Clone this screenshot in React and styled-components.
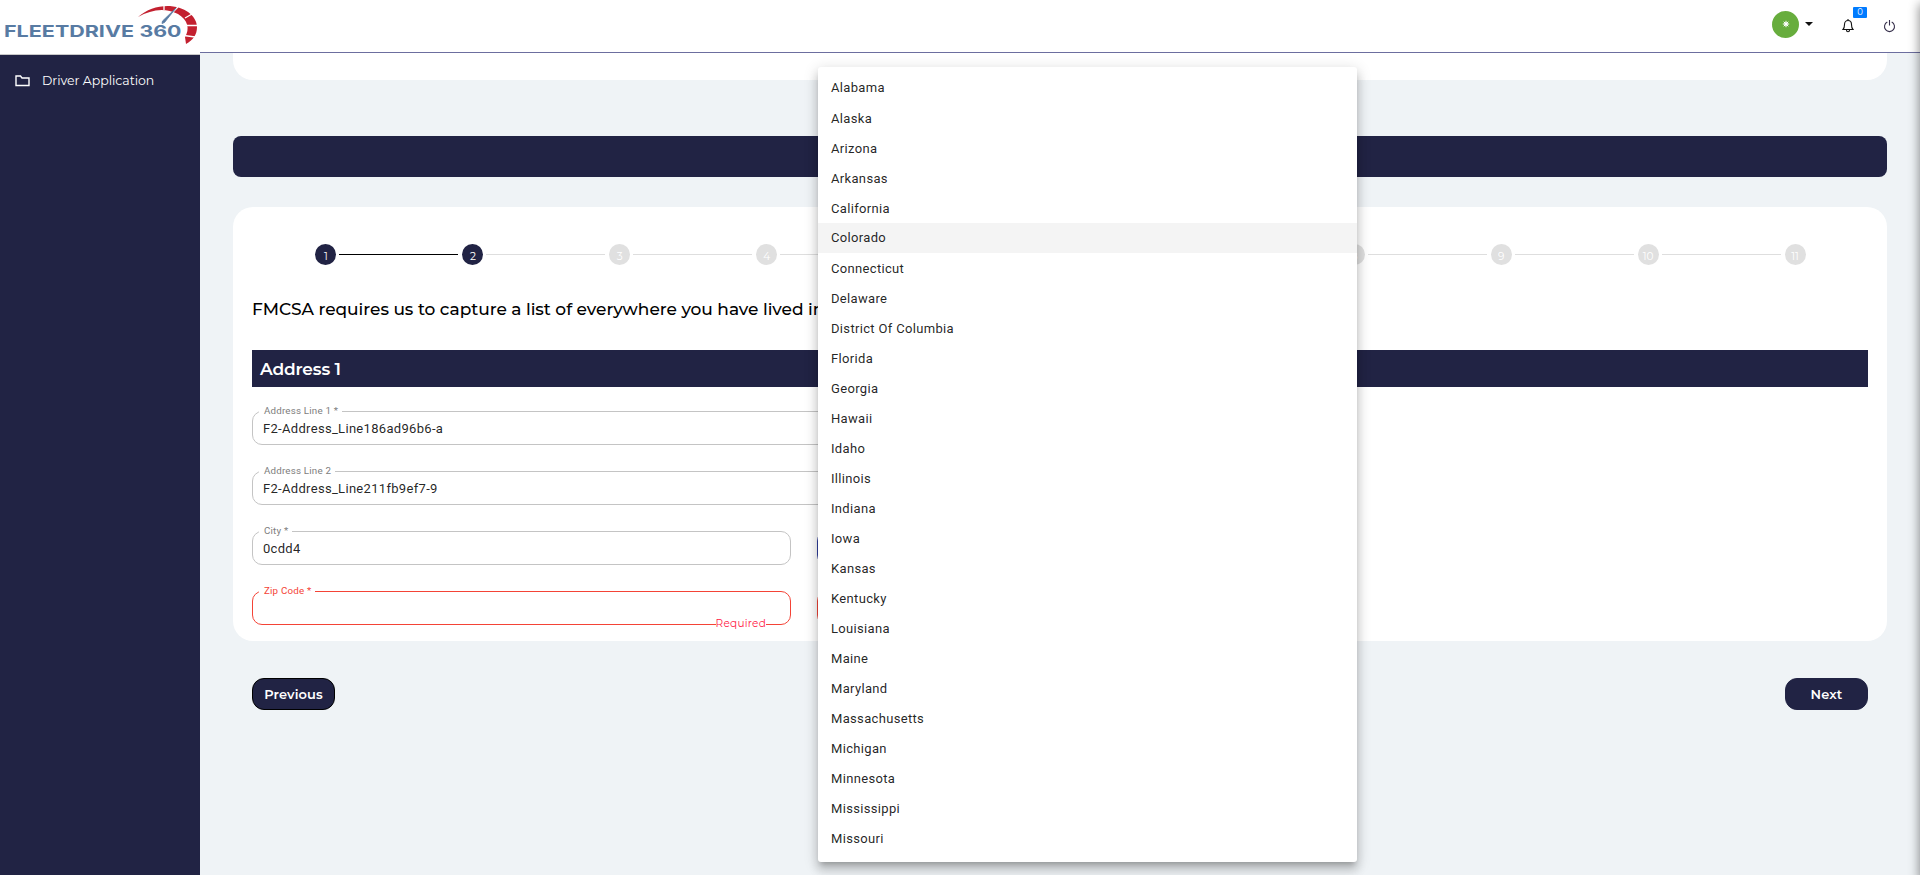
import React from "react";
import styled, { createGlobalStyle, css } from "styled-components";

const navy = "#212344";
const display = `Montserrat, Inter, "Open Sans", sans-serif`;
const body = `Roboto, "Liberation Sans", sans-serif`;

const Global = createGlobalStyle`
  * { box-sizing: border-box; }
  html, body { margin: 0; height: 100%; overflow: hidden; }
  body { background: #eff3f6; font-family: ${display}; }
`;

const Shell = styled.div`
  position: relative;
  display: grid;
  grid-template-columns: 200px 1fr;
  width: 100%;
  height: 100vh;
  overflow: hidden;
`;
const Sidebar = styled.aside`
  display: flex;
  flex-direction: column;
  background: ${navy};
`;
const Brand = styled.div`
  height: 55px;
  background: #fff;
  border-bottom: 1px solid #c9c9c9;
  svg { display: block; }
`;
const NavItem = styled.a`
  display: flex;
  align-items: center;
  gap: 12px;
  height: 52px;
  padding: 0 0 1px 15px;
  color: #fff;
  font-size: 12.5px;
  letter-spacing: -0.03px;
  svg { display: block; }
`;
const Main = styled.div`
  display: flex;
  flex-direction: column;
  min-width: 0;
`;
const Header = styled.header`
  display: flex;
  justify-content: flex-end;
  flex: none;
  height: 53px;
  padding-right: 24px;
  background: #fff;
  border-bottom: 1px solid #6c6e9f;
`;
const Account = styled.div`
  display: flex;
  align-items: center;
  gap: 6px;
  height: 48px;
  margin-right: 29px;
`;
const Avatar = styled.span`
  display: grid;
  place-items: center;
  width: 27px;
  height: 27px;
  border-radius: 50%;
  background: #67ad3d;
`;
const Caret = styled.i`
  border: 4px solid transparent;
  border-top-color: #111;
  border-bottom: 0;
`;
const Alerts = styled.div`
  position: relative;
  width: 12px;
  margin-right: 29px;
  padding-top: 19px;
  svg { display: block; }
`;
const Badge = styled.span`
  position: absolute;
  top: 7px;
  left: 11px;
  width: 14px;
  height: 11px;
  border-radius: 1px;
  background: #007bff;
  color: #fff;
  font-size: 8.5px;
  line-height: 10px;
  text-align: center;
`;
const Power = styled.div`
  padding-top: 20px;
  svg { display: block; }
`;
const Content = styled.main`
  padding: 0 33px;
`;
const TopCard = styled.div`
  height: 27px;
  background: #fff;
  border-radius: 0 0 20px 20px;
`;
const Banner = styled.div`
  height: 41px;
  margin: 56px 0 30px;
  border-radius: 8px;
  background: ${navy};
`;
const Card = styled.section`
  height: 434px;
  padding: 37px 19px 0;
  border-radius: 20px;
  background: #fff;
`;
const Steps = styled.div`
  display: flex;
  height: 21px;
`;
const Step = styled.div`
  display: flex;
  align-items: center;
  flex: 1;
`;
const Line = styled.span`
  flex: 1;
  height: 1px;
  background: ${(p) => (p.$hidden ? "transparent" : p.$done ? "#000" : "#dedede")};
`;
const Dot = styled.span`
  width: 21px;
  height: 21px;
  margin: 0 3px 0 4px;
  padding-top: 2px;
  border-radius: 50%;
  background: ${(p) => (p.$done ? navy : "#e0e0e0")};
  color: #fff;
  font-size: 10.5px;
  line-height: 21px;
  text-align: center;
`;
const Question = styled.h2`
  margin: 33px 0 0;
  height: 52px;
  color: #000;
  font-size: 17px;
  font-weight: 500;
  line-height: 22px;
  letter-spacing: -0.04px;
  white-space: nowrap;
`;
const SectionBar = styled.h3`
  margin: 0 0 24px;
  padding: 0 8px;
  height: 37px;
  background: ${navy};
  color: #fff;
  font-size: 17px;
  font-weight: 600;
  line-height: 39px;
  letter-spacing: -0.15px;
`;
const Fields = styled.div`
  display: grid;
  grid-template-columns: 539px 540px;
  grid-auto-rows: 34px;
  gap: 26px;
`;
const Field = styled.div`
  position: relative;
  grid-column: ${(p) => (p.$wide ? "1 / -1" : "auto")};
  padding-left: 10px;
  border: 1px solid ${(p) => (p.$error ? "#f44336" : p.$focus ? "#303f9f" : "#c4c4c4")};
  border-radius: 10px;
  color: rgba(0, 0, 0, 0.87);
  font: 13px/34px ${body};
  letter-spacing: 0.31px;
`;
const Label = styled.label`
  position: absolute;
  top: -7px;
  left: 6px;
  padding: 0 4px 0 5px;
  background: #fff;
  color: ${(p) => (p.$error ? "#f44336" : "#7d7d7d")};
  font-size: 9.75px;
  line-height: 12px;
  letter-spacing: 0.2px;
`;
const Hint = styled.span`
  position: absolute;
  right: 24px;
  bottom: -6px;
  background: #fff;
  color: #ff1744;
  font: 10.5px/13px ${display};
  letter-spacing: 0.24px;
`;
const Actions = styled.div`
  display: flex;
  justify-content: space-between;
  padding: 37px 19px 0;
`;
const Button = styled.button`
  width: 83px;
  height: 32px;
  padding: 0 0 1px;
  border: 1px solid ${(p) => (p.$outlined ? "#000" : navy)};
  border-radius: 12px;
  background: ${navy};
  color: #fff;
  font: 600 13px ${display};
  letter-spacing: 0.1px;
`;
const Menu = styled.ul`
  position: absolute;
  top: 67px;
  left: 818px;
  width: 539px;
  height: 795px;
  margin: 0;
  padding: 6px 0;
  border-radius: 3px;
  background: #fff;
  list-style: none;
  box-shadow: 0 5px 5px -3px rgba(0, 0, 0, 0.2), 0 8px 10px 1px rgba(0, 0, 0, 0.14),
    0 3px 14px 2px rgba(0, 0, 0, 0.12);
`;
const Option = styled.li`
  height: 30px;
  padding-left: 13px;
  color: rgba(0, 0, 0, 0.87);
  font: 13px/31px ${body};
  letter-spacing: 0.33px;
  &:first-child { line-height: 29px; }
  ${(p) =>
    p.$active &&
    css`
      background: #f4f4f4;
      line-height: 29px;
    `}
`;
const Drawer = styled.div`
  position: absolute;
  top: 5px;
  left: 100%;
  width: 300px;
  height: 100%;
  box-shadow: 0 0 10px 1px rgba(0, 0, 0, 0.42);
`;

const Logo = () => (
  <svg width="200" height="54" viewBox="0 0 200 54">
    <g fontFamily="Inter, sans-serif" fontWeight="700" fontSize="15.8" fill="#587ba3">
      <text x="4" y="36.700" textLength="130" lengthAdjust="spacingAndGlyphs">FLEETDRIVE</text>
      <text x="139.500" y="36.700" textLength="42" lengthAdjust="spacingAndGlyphs">360</text>
    </g>
    <path d="M138 17C147 9 158 5.500 170 6C188 7.500 197 18 197 27C197 35 193 40 186 44L185 37C190 29 188 20 178 14C164 7 151 10 138 17Z" fill="#c3202f" />
    <path d="M164 5V10M178 7L173 12M192 14L185 18M198 25.500H185M195 37L184 35.500" stroke="#fff" strokeWidth="1.300" />
    <path d="M176 8L164.500 22.500L162 23.500L162.500 21Z" fill="#587ba3" stroke="#587ba3" strokeWidth=".8" />
  </svg>
);

const steps = Array.from({ length: 11 }, (_, i) => i + 1);
const states = [
  "Alabama", "Alaska", "Arizona", "Arkansas", "California", "Colorado", "Connecticut",
  "Delaware", "District Of Columbia", "Florida", "Georgia", "Hawaii", "Idaho", "Illinois",
  "Indiana", "Iowa", "Kansas", "Kentucky", "Louisiana", "Maine", "Maryland",
  "Massachusetts", "Michigan", "Minnesota", "Mississippi", "Missouri",
];

export default function App() {
  return (
    <Shell>
      <Global />
      <Sidebar>
        <Brand><Logo /></Brand>
        <NavItem>
          <svg width="15" height="12" viewBox="0 0 15 12" fill="none" stroke="#fff" strokeWidth="1.4">
            <path d="M1 1H5.500L7 3H14V10.500H1Z" />
          </svg>
          Driver Application
        </NavItem>
      </Sidebar>
      <Main>
        <Header>
          <Account>
            <Avatar>
              <svg width="8" height="8" viewBox="0 0 8 8" stroke="#fff" strokeWidth="1">
                <path d="M4 .8V7.200M.8 4H7.200M1.700 1.700L6.300 6.300M6.300 1.700L1.700 6.300" />
                <circle cx="4" cy="4" r="1.200" fill="#fff" />
              </svg>
            </Avatar>
            <Caret />
          </Account>
          <Alerts>
            <svg width="12" height="14" viewBox="0 0 12 14" fill="none" stroke="#111" strokeWidth="1.100">
              <path d="M1 10.500C2.500 9 2.500 8 2.500 5.500C2.500 3 4 1.500 6 1.500S9.500 3 9.500 5.500C9.500 8 9.500 9 11 10.500ZM6 0V1.500M4.500 11C4.500 13.300 7.500 13.300 7.500 11" />
            </svg>
            <Badge>0</Badge>
          </Alerts>
          <Power>
            <svg width="13" height="13" viewBox="0 0 13 13" fill="none" stroke="#37304c" strokeWidth="1.100">
              <path d="M4.300 2.100A5 5 0 1 0 8.700 2.100M6.500 0V5.500" />
            </svg>
          </Power>
        </Header>
        <Content>
          <TopCard />
          <Banner />
          <Card>
            <Steps>
              {steps.map((n) => (
                <Step key={n}>
                  <Line $hidden={n === 1} $done={n <= 2} />
                  <Dot $done={n <= 2}>{n}</Dot>
                  <Line $hidden={n === 11} $done={n === 1} />
                </Step>
              ))}
            </Steps>
            <Question>FMCSA requires us to capture a list of everywhere you have lived in</Question>
            <SectionBar>Address 1</SectionBar>
            <Fields>
              <Field $wide><Label>Address Line 1 *</Label>F2-Address_Line186ad96b6-a</Field>
              <Field $wide><Label>Address Line 2</Label>F2-Address_Line211fb9ef7-9</Field>
              <Field><Label>City *</Label>0cdd4</Field>
              <Field $focus />
              <Field $error><Label $error>Zip Code *</Label><Hint>Required</Hint></Field>
              <Field $error />
            </Fields>
          </Card>
          <Actions>
            <Button $outlined>Previous</Button>
            <Button>Next</Button>
          </Actions>
        </Content>
      </Main>
      <Menu>
        {states.map((s) => (
          <Option key={s} $active={s === "Colorado"}>{s}</Option>
        ))}
      </Menu>
      <Drawer />
    </Shell>
  );
}
